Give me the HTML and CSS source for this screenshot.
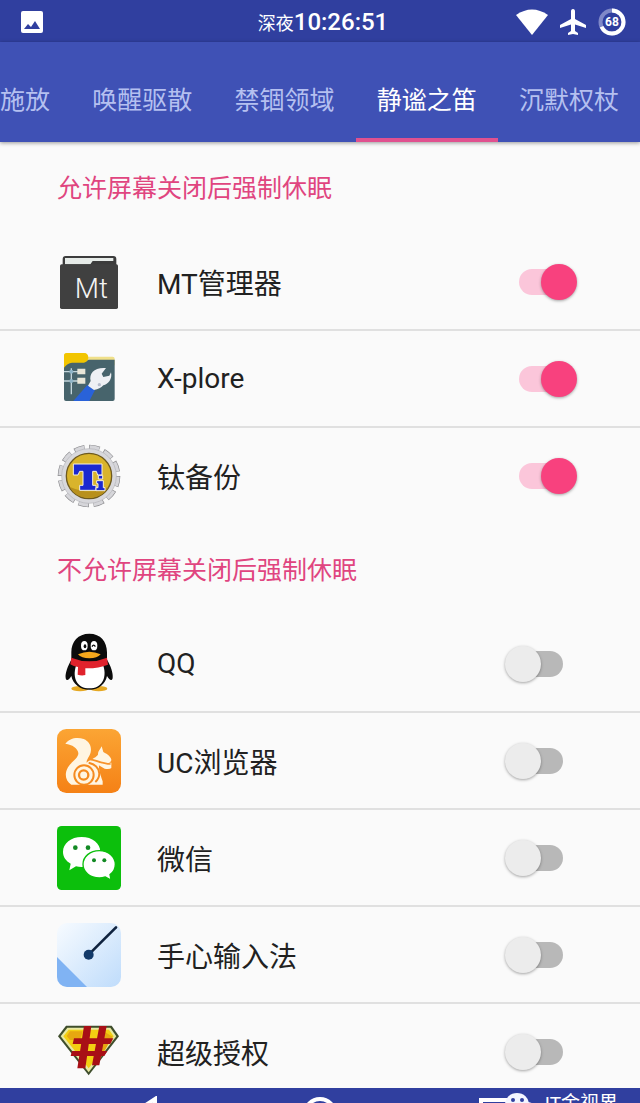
FILE: index.html
```html
<!DOCTYPE html>
<html lang="zh-CN">
<head>
    <meta charset="UTF-8">
    <meta name="viewport" content="width=device-width, initial-scale=1.0">
    <title>静谧之笛</title>
    <link rel="stylesheet" href="styles.css">
</head>
<body>
    <header class="status">
        <div class="status__left">
            <svg width="24" height="24" viewBox="0 0 24 24">
                <rect x="1" y="1" width="22" height="22" rx="2" fill="#fff"/>
                <path d="M4 19l4-5 3 3 4-6 5 8z" fill="#303f9f"/>
            </svg>
        </div>
        <div class="clock"><span class="clock__period">深夜</span>10:26:51</div>
        <div class="status__right">
            <svg width="32" height="26" viewBox="0 0 32 26">
                <path d="M0 6Q16-5 32 6L16 26z" fill="#fff"/>
            </svg>
            <svg width="26" height="26" viewBox="0 0 26 26">
                <path d="M13 0c1.500 0 2 1 2 2.500V10l11 6v3l-11-3.500V22l3 2v2l-5-1-5 1v-2l3-2v-6.500L0 19v-3l11-6V2.500C11 1 11.500 0 13 0z" fill="#fff"/>
            </svg>
            <svg width="28" height="28" viewBox="0 0 28 28">
                <circle cx="14" cy="14" r="11.500" fill="none" stroke="#7f88c8" stroke-width="4"/>
                <circle cx="14" cy="14" r="11.500" fill="none" stroke="#fff" stroke-width="4" stroke-dasharray="49 24" transform="rotate(-90 14 14)"/>
                <text x="14" y="18" class="battery">68</text>
            </svg>
        </div>
    </header>

    <nav class="tabs">
        <a class="tab tab--cut" href="#">施放</a>
        <a class="tab" href="#">唤醒驱散</a>
        <a class="tab" href="#">禁锢领域</a>
        <a class="tab tab--active" href="#">静谧之笛</a>
        <a class="tab" href="#">沉默权杖</a>
    </nav>

    <main class="list">
        <h2 class="title">允许屏幕关闭后强制休眠</h2>
        <label class="row">
            <svg class="icon" viewBox="51 27 192 192">
                <path d="M68 76V54q0-9 9-9h143q9 0 9 9v22z" fill="#3c3c3c"/>
                <path d="M75 70V51h145v9h-62l-7 10z" fill="#e6ebe8"/>
                <rect x="60" y="70" width="174" height="134" rx="5" fill="#404040"/>
                <text x="104" y="170" class="icon__mt">Mt</text>
            </svg>
            <span class="name">MT管理器</span>
            <input class="switch" type="checkbox" checked>
        </label>
        <label class="row">
            <svg class="icon" viewBox="51 18 192 192">
                <path d="M72 72V44q0-8 8-8h52q8 0 12 11h74q6 0 6 6v20z" fill="#f0e08a"/>
                <path d="M72 76q8-13 22-16h38q8 0 14-4h78v118q0 6-6 6H78q-6 0-6-6z" fill="#47646c"/>
                <path d="M72 80V44q0-8 8-8h52q13 0 13 15-2 12-13 14H96q-14 2-24 15z" fill="#f2c500"/>
                <path d="M72 92h42M72 120h42M94 82v78" stroke="#c3d5dc" stroke-width="4"/>
                <circle cx="94" cy="92" r="6" fill="#8fb5c8"/>
                <circle cx="94" cy="120" r="6" fill="#8fb5c8"/>
                <path d="M112 83h24v17h-24zM112 110h24v18h-24z" fill="#e9e6d8"/>
                <path d="M100 180l42-48 23 15-17 33z" fill="#2962d9"/>
                <path d="M144 134l8-14c-6-24 12-42 46-39l-13 17 5 10 18-4 5-10c5 20-9 37-23 39-7 8-15 12-28 14z" fill="#eef0f4"/>
                <circle cx="178" cy="131" r="5" fill="#b7bdcc"/>
            </svg>
            <span class="name">X-plore</span>
            <input class="switch" type="checkbox" checked>
        </label>
        <label class="row row--last">
            <svg class="icon" viewBox="51 24 192 192">
                <circle cx="147" cy="120" r="82" fill="none" stroke="#8d8d90" stroke-width="24" stroke-dasharray="30 12.900" stroke-linejoin="round"/>
                <circle cx="147" cy="120" r="82" fill="none" stroke="#d6d6da" stroke-width="20" stroke-dasharray="27 15.900" stroke-dashoffset="-2"/>
                <circle cx="147" cy="120" r="82" fill="#d8d8dc" stroke="#b5b5ba" stroke-width="2"/>
                <circle cx="147" cy="120" r="68" fill="#d9b42c" stroke="#6e5a20" stroke-width="4"/>
                <path d="M88 152a68 68 0 0 0 118 0q-54 28-118 0z" fill="#b8901c"/>
                <path d="M100 84h86v33h-13l-4-11h-11v42h10v15h-49v-15h10v-42h-10l-5 11h-14z" fill="#1b28d0" stroke="#f5f0dc" stroke-width="3"/>
                <path d="M175 118h13v11h-13zM170 134h20v21h5v9h-27v-9h6v-12h-4z" fill="#1b28d0" stroke="#f5f0dc" stroke-width="3"/>
            </svg>
            <span class="name">钛备份</span>
            <input class="switch" type="checkbox" checked>
        </label>

        <h2 class="title">不允许屏幕关闭后强制休眠</h2>
        <label class="row">
            <svg class="icon" viewBox="51 21 192 192">
                <ellipse cx="120" cy="191" rx="26" ry="8" fill="#e5a823"/>
                <ellipse cx="176" cy="191" rx="26" ry="8" fill="#e5a823"/>
                <path d="M148 26c34 0 53 24 53 56v22c11 18 19 40 17 55-2 10-9 8-17-6-5 24-24 41-53 41s-49-17-54-41c-8 14-15 16-17 6-2-15 7-37 17-55V82c0-32 20-56 54-56z" fill="#0b0b0b"/>
                <path d="M108 122h82c12 38-6 68-42 68s-52-30-40-68z" fill="#fff"/>
                <ellipse cx="133" cy="62" rx="10" ry="14" fill="#fff"/>
                <ellipse cx="162" cy="62" rx="10" ry="14" fill="#fff"/>
                <ellipse cx="135" cy="64" rx="4" ry="6" fill="#0b0b0b"/>
                <path d="M156 65q5-9 10 0" fill="none" stroke="#0b0b0b" stroke-width="4"/>
                <path d="M114 88q34-15 68 0-10 12-34 12t-34-12z" fill="#f5a81c"/>
                <path d="M94 98q54 22 107 0l3 21q-30 12-68 11v20q-11 3-23-1l1-23q-14-2-23-8z" fill="#e0222c"/>
            </svg>
            <span class="name">QQ</span>
            <input class="switch" type="checkbox">
        </label>
        <label class="row">
            <svg class="icon" viewBox="51 23 192 192">
                <defs>
                    <linearGradient id="uc" x1="0" y1="0" x2="0" y2="1">
                        <stop offset="0" stop-color="#fba534"/>
                        <stop offset="1" stop-color="#f58116"/>
                    </linearGradient>
                </defs>
                <rect x="51" y="23" width="192" height="192" rx="28" fill="url(#uc)"/>
                <path d="M76 67C88 50 112 46 131 53c22 9 27 32 17 50-6 11-9 15-8 21 10-11 25-12 34-24-1-9 6-15 11-25l5 17c14 7 25 17 24 25-3 9-14 11-26 12l-11 1c-1 14 3 27 11 50v10H94c-17-10-22-32-10-52 9-16 32-27 31-43-2-15-18-25-39-28z" fill="#fff5e2"/>
                <path d="M150 116q16-8 42 8h22v16q-4 4-20 2z" fill="#fff5e2"/>
                <path d="M146 114c18-2 34 14 66 14" fill="none" stroke="#f7922a" stroke-width="5"/>
                <path d="M146 124c18 4 31 16 32 32 0 10-5 20-12 26" fill="none" stroke="#f58b20" stroke-width="6"/>
                <circle cx="132" cy="161" r="29" fill="#fff5e2" stroke="#f58b20" stroke-width="6"/>
                <circle cx="131" cy="161" r="14" fill="#fff5e2" stroke="#f58b20" stroke-width="7"/>
            </svg>
            <span class="name">UC浏览器</span>
            <input class="switch" type="checkbox">
        </label>
        <label class="row">
            <svg class="icon" viewBox="51 23 192 192">
                <rect x="51" y="23" width="192" height="192" rx="14" fill="#0cbf0c"/>
                <path d="M125 56c32 0 56 19 56 45 0 27-24 45-56 45-6 0-12-1-17-2l-20 12 4-20c-14-8-23-20-23-35 0-26 24-45 56-45z" fill="#fff"/>
                <path d="M178 97c28 0 48 18 48 41 0 13-6 24-16 31l3 16-17-9c-6 2-12 3-18 3-28 0-49-18-49-41s21-41 49-41z" fill="#fff" stroke="#0cbf0c" stroke-width="4"/>
                <circle cx="106" cy="88" r="7" fill="#138a24"/>
                <circle cx="144" cy="88" r="7" fill="#138a24"/>
                <circle cx="162" cy="126" r="6" fill="#138a24"/>
                <circle cx="193" cy="126" r="6" fill="#138a24"/>
            </svg>
            <span class="name">微信</span>
            <input class="switch" type="checkbox">
        </label>
        <label class="row">
            <svg class="icon" viewBox="51 22 192 192">
                <defs>
                    <linearGradient id="palm" x1="0" y1="0" x2="1" y2="1">
                        <stop offset="0" stop-color="#f7fbff"/>
                        <stop offset="1" stop-color="#bfdcfb"/>
                    </linearGradient>
                    <clipPath id="palm-clip"><rect x="51" y="22" width="192" height="192" rx="30"/></clipPath>
                </defs>
                <g clip-path="url(#palm-clip)">
                    <rect x="51" y="22" width="192" height="192" fill="url(#palm)"/>
                    <path d="M51 124l90 90H51z" fill="#80b3f3"/>
                </g>
                <path d="M146 117l82-82" stroke="#10233f" stroke-width="8" stroke-linecap="round"/>
                <circle cx="146" cy="117" r="15" fill="#133a69"/>
            </svg>
            <span class="name">手心输入法</span>
            <input class="switch" type="checkbox">
        </label>
        <label class="row row--last">
            <svg class="icon" viewBox="51 30 192 192">
                <path d="M78 47h137l22 32-91 117L54 79z" fill="#3e4d2c"/>
                <path d="M82 53h129l18 26-83 108L62 79z" fill="#e8e9a2"/>
                <path d="M86 59h121l14 20-75 96-76-96z" fill="#f3cf12"/>
                <path d="M120 90h-30l-10-12 10-14h38zM178 150l40-70-24-14-10 40z" fill="#e6a810"/>
                <path d="M132 48h22l-18 127h-24zM178 48h22l-22 118h-22zM102 85h118l-9 17H98zM96 123h106l-9 15H92z" fill="#a80f16"/>
            </svg>
            <span class="name">超级授权</span>
            <input class="switch" type="checkbox">
        </label>
    </main>

    <footer class="navbar">
        <button class="navbar__btn" aria-label="返回">
            <svg width="36" height="36" viewBox="0 0 36 36"><path d="M26 3v30L3 18z" fill="none" stroke="#fff" stroke-width="4"/></svg>
        </button>
        <button class="navbar__btn" aria-label="主页">
            <svg width="36" height="36" viewBox="0 0 36 36"><circle cx="18" cy="18" r="15" fill="none" stroke="#fff" stroke-width="4"/></svg>
        </button>
        <button class="navbar__btn" aria-label="最近任务">
            <svg width="36" height="36" viewBox="0 0 36 36"><rect x="6" y="4" width="30" height="28" fill="none" stroke="#fff" stroke-width="4"/></svg>
        </button>
        <div class="mark">
            <svg width="36" height="30" viewBox="0 0 36 30">
                <ellipse cx="12" cy="12" rx="12" ry="11" fill="#f3f5ff"/>
                <circle cx="8" cy="8" r="2" fill="#303f9f"/>
                <circle cx="17" cy="8" r="2" fill="#303f9f"/>
                <ellipse cx="22" cy="19" rx="10" ry="9" fill="#f3f5ff"/>
            </svg>
            IT金视界
        </div>
    </footer>
</body>
</html>
```

FILE: styles.css
```css
*{
    box-sizing: border-box;
}
body{
    display: flex;
    flex-direction: column;
    height: 100vh;
    margin: 0;
    overflow: hidden;
    background-color: #fafafa;
    color: #212121;
    font-family: Roboto, "Noto Sans CJK SC", sans-serif;
}
.status{
    display: grid;
    grid-template-columns: 1fr auto 1fr;
    align-items: center;
    flex: none;
    height: 42px;
    padding: 0 14px 0 20px;
    background-color: #303f9f;
    color: #fff;
}
.status svg{
    display: block;
}
.status__right{
    display: flex;
    align-items: center;
    justify-content: flex-end;
    gap: 12px;
}
.clock{
    padding-top: 2px;
    font-size: 24px;
    font-weight: 500;
    line-height: 40px;
}
.clock__period{
    font-size: 18px;
    font-weight: 400;
}
.battery{
    fill: #fff;
    font-size: 12px;
    font-weight: 700;
    text-anchor: middle;
}
.tabs{
    display: flex;
    flex: none;
    height: 100px;
    background-color: #3f51b5;
    box-shadow: 0 1px 4px rgba(0,0,0,0.4);
}
.tab{
    flex: 1 0 auto;
    padding: 18px 21px 0;
    border-bottom: 4px solid transparent;
    color: #b5c0f0;
    font-size: 25px;
    line-height: 82px;
    text-align: center;
    text-decoration: none;
    white-space: nowrap;
}
.tab--cut{
    flex-grow: 0;
    padding-left: 0;
}
.tab--active{
    border-bottom-color: #e0518f;
    color: #fff;
}
.list{
    flex: 1;
    min-height: 0;
    padding-top: 1px;
    overflow: hidden;
}
.title{
    margin: 0;
    padding-left: 57px;
    color: #e0457f;
    font-size: 25px;
    font-weight: 400;
    line-height: 91px;
}
.row{
    display: flex;
    align-items: center;
    gap: 36px;
    height: 97px;
    padding: 0 63px 0 57px;
    border-bottom: 2px solid #e0e0e0;
}
.row--last{
    border-bottom-color: transparent;
}
.icon{
    flex: none;
    width: 64px;
    height: 64px;
}
.icon__mt{
    fill: #f4f4f4;
    font-size: 84px;
    font-weight: 300;
}
.name{
    flex: 1;
    font-size: 28px;
}
/* 開關：軌道和圓鈕疊在同一個 grid 格子裡 */
.switch{
    appearance: none;
    display: grid;
    align-items: center;
    width: 72px;
    height: 36px;
    margin: 0;
}
.switch::before{
    content: '';
    grid-area: 1 / 1;
    height: 26px;
    margin: 0 14px;
    border-radius: 13px;
    background-color: #b8b8b8;
}
.switch::after{
    content: '';
    grid-area: 1 / 1;
    width: 36px;
    height: 36px;
    border-radius: 50%;
    background-color: #ececec;
    box-shadow: 0 1px 3px rgba(0,0,0,0.35);
}
.switch:checked::before{
    background-color: #fbc6da;
}
.switch:checked::after{
    justify-self: end;
    background-color: #f8417e;
}
.navbar{
    display: grid;
    grid-template-columns: 1fr 1fr 1fr;
    justify-items: center;
    align-items: start;
    position: relative;
    flex: none;
    height: 15px;
    padding: 0 60px;
    overflow: hidden;
    background-color: #303f9f;
}
.navbar__btn{
    padding: 8px 0 0;
    border: 0;
    background: none;
}
.mark{
    display: flex;
    gap: 4px;
    position: absolute;
    top: 4px;
    right: 22px;
    color: #fff;
    font-size: 19px;
    line-height: 24px;
}
```
